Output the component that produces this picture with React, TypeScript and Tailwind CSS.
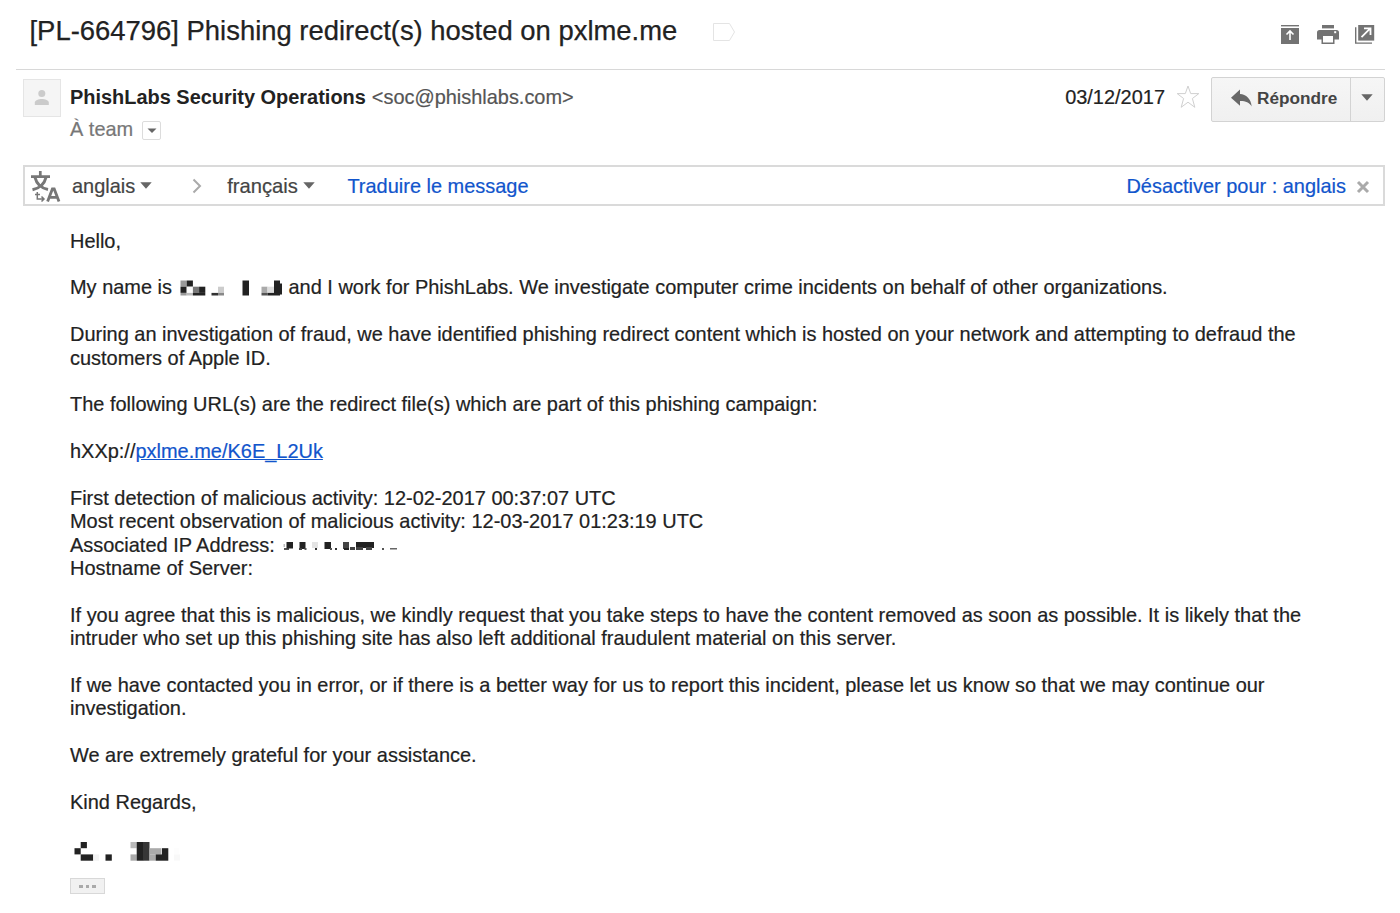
import type { ReactNode } from "react";

type Cell = [x: number, y: number, w: number, h: number, fill: string];

function Mosaic({ width, height, cells, className }: { width: number; height: number; cells: Cell[]; className: string }) {
  return (
    <svg width={width} height={height} viewBox={`0 0 ${width} ${height}`} className={className} aria-hidden="true">
      {cells.map(([x, y, w, h, fill], i) => (
        <rect key={i} x={x} y={y} width={w} height={h} fill={fill} />
      ))}
    </svg>
  );
}

const nameCells: Cell[] = [
  [0.5, 0.5, 6.2, 6.2, "#999"], [6.7, 0.5, 6.2, 6.2, "#222"], [0.5, 6.7, 6.2, 6.2, "#222"], [0.5, 12.9, 6.2, 2.6, "#999"],
  [6.7, 6.7, 6.2, 6.2, "#fafafa"], [12.9, 6.7, 6.2, 6.2, "#777"], [19.1, 6.7, 6.2, 6.2, "#222"],
  [6.7, 12.9, 6.2, 2.6, "#bbb"], [12.9, 12.9, 12.4, 2.6, "#222"],
  [31.5, 12.9, 6.5, 2.6, "#333"], [38, 6.7, 6, 6.2, "#ccc"], [38, 12.9, 6, 2.6, "#888"],
  [62.5, 0.5, 6.5, 15, "#222"],
  [81.5, 6.7, 6, 6.2, "#aaa"], [87.5, 6.7, 6.5, 6.2, "#ddd"], [94, 0.5, 6, 15, "#222"], [100, 3.5, 2, 11, "#222"],
  [81.5, 12.9, 6, 2.6, "#555"], [87.5, 12.9, 6.5, 2.6, "#222"],
];

const ipCells: Cell[] = [
  [0.5, 3, 1.5, 3, "#bbb"], [1, 7, 5, 2, "#555"], [3.5, 1, 6.5, 6.5, "#222"], [16.5, 1, 6, 7, "#222"], [16, 7, 3, 2, "#444"],
  [21.5, 7, 2, 2, "#555"], [29, 1, 6, 6, "#e4e4e4"], [32, 7, 2, 2, "#333"], [41.5, 1, 6.5, 7, "#222"], [47, 7, 2, 2, "#555"],
  [52, 7, 2, 2, "#333"], [60, 1, 6, 7, "#444"], [61, 7, 5, 2, "#222"], [67, 6, 5, 3, "#444"], [73, 1, 18, 6, "#222"], [73, 6, 7, 3, "#444"],
  [83, 6, 6, 3, "#444"], [99, 7, 2, 2, "#555"], [107, 7, 7, 1.5, "#666"],
];

const signatureCells: Cell[] = [
  [6.7, 1, 6.2, 6.2, "#222"], [0.5, 7.2, 6.2, 6.2, "#222"], [6.7, 13.4, 12.5, 6.3, "#222"], [19.2, 13.4, 6, 6.3, "#f2f2f2"],
  [31.5, 13.4, 6.3, 6.3, "#222"],
  [56.5, 1, 6.2, 6.2, "#bbb"], [56.5, 13.4, 6.2, 6.3, "#aaa"], [62.7, 1, 6.5, 18.7, "#222"], [69, 1, 6.5, 18.7, "#373737"],
  [75.5, 7.2, 12, 6.3, "#aaa"], [75.5, 13.4, 6.2, 6.3, "#aaa"], [81.7, 13.4, 6.3, 6.3, "#222"], [88, 7.2, 6.3, 12.5, "#222"],
  [100, 7, 5, 6, "#fdfdfd"], [100, 13.5, 6, 6, "#f8f8f8"],
];

function Caret({ className = "" }: { className?: string }) {
  return (
    <svg width="12" height="7" viewBox="0 0 12 7" className={className}>
      <path d="M0.3 0.3H11.7L6 6.7Z" fill="currentColor" />
    </svg>
  );
}

function Line({ children }: { children?: ReactNode }) {
  return <div className="flex h-[23.375px] items-center whitespace-nowrap">{children}</div>;
}

function SubjectBar() {
  return (
    <header className="ml-4 mr-[15px] flex h-[70px] items-start border-b-[1.5px] border-[#d8d8d8] pl-[13.5px]">
      <h1 className="mt-[15px] whitespace-nowrap text-[27.43px] leading-8 [-webkit-text-stroke:0.25px]">[PL-664796] Phishing redirect(s) hosted on pxlme.me</h1>
      <svg width="24" height="20" viewBox="0 0 24 20" className="ml-[35px] mt-[22px] shrink-0">
        <path d="M1.5 1.5H17.5L22.5 10L17.5 18.5H1.5Z" fill="none" stroke="#e4e4e4" />
      </svg>
      <div className="ml-auto mr-[10px] mt-[24px] flex items-start text-[#737373]">
        <svg width="18" height="20" viewBox="0 0 18 20" fill="currentColor">
          <rect y="1" width="18" height="1.4" />
          <rect y="4" width="18" height="16" />
          <path d="M9 16V7.5M5.5 10.5L9 7L12.5 10.5" fill="none" stroke="#fff" strokeWidth="1.6" />
        </svg>
        <svg width="22" height="20" viewBox="0 0 22 20" fill="currentColor" className="ml-[18px]">
          <rect x="5" y="1" width="12" height="3.4" />
          <path d="M2.5 6H19.5Q22 6 22 8.5V15.5H17.5V20H4.5V15.5H0V8.5Q0 6 2.5 6Z" />
          <rect x="6" y="12" width="10" height="6.5" fill="#fff" />
          <rect x="17.2" y="7.2" width="2" height="2" fill="#fff" />
        </svg>
        <svg width="20" height="20" viewBox="0 0 20 20" fill="currentColor" className="ml-4">
          <path d="M0 3.2H1.4V18.4H17V19.8H0Z" />
          <rect x="3.2" y="1" width="16" height="15.6" />
          <path d="M6.5 13.2L15 4.7M9 4.4H15.5V11" fill="none" stroke="#fff" strokeWidth="1.8" />
        </svg>
      </div>
    </header>
  );
}

function SenderRow() {
  return (
    <section className="ml-[23px] mr-[15px] flex h-[95px] items-start">
      <div className="mt-[9px] flex size-[38px] items-center justify-center border border-[#e5e5e5] bg-[#f5f5f5]">
        <svg width="16" height="17" viewBox="0 0 16 17" fill="#cbcbcb" className="mb-px">
          <circle cx="7.8" cy="4.5" r="3.5" />
          <path d="M0.8 16V13.5C0.8 11.3 4.5 9.9 7.8 9.9S14.8 11.3 14.8 13.5V16Z" />
        </svg>
      </div>
      <div className="ml-[9px] mt-4">
        <div className="flex h-6 items-center whitespace-nowrap">
          <strong className="text-[19.94px]">PhishLabs Security Operations</strong>
          <span className="ml-1.5 text-[19.93px] text-[#555] [-webkit-text-stroke:0.2px]">&lt;soc@phishlabs.com&gt;</span>
        </div>
        <div className="mt-[8px] flex h-6 items-center text-[#777] [-webkit-text-stroke:0.2px]">
          À team
          <span className="ml-[9px] flex size-[19px] items-center justify-center rounded-[2px] border-[1.5px] border-[#dcdcdc] text-[#666]">
            <svg width="10" height="6" viewBox="0 0 10 6" className="mt-0.5"><path d="M0.5 0.5H9.5L5 5Z" fill="currentColor" /></svg>
          </span>
        </div>
      </div>
      <span className="ml-auto mt-[15px] leading-6 [-webkit-text-stroke:0.2px]">03/12/2017</span>
      <svg width="24" height="25" viewBox="0 0 24 25" className="ml-[11px] mt-[14px]">
        <path d="M12 2L14.7 9.6H22.8L16.4 14.5L18.8 23.3L12 18.2L5.2 23.3L7.6 14.5L1.2 9.6H9.3Z" fill="none" stroke="#d0d0d0" />
      </svg>
      <div className="ml-[11px] mt-[7px] flex h-[45px] w-[174px] rounded-[2px] border border-[#d3d3d3] bg-linear-to-b from-[#f6f6f6] to-[#f0f0f0] text-[#666]">
        <button className="flex w-[139px] items-center border-r border-[#d3d3d3] pb-0.5 pl-[19px]">
          <svg width="21" height="19" viewBox="0 0 21 19" fill="#686868">
            <path d="M0 8.7L9 0.5V5C15 5.4 20 9.5 20.7 17.5C18.3 13.6 14.5 12 9 12.1V16.8Z" />
          </svg>
          <span className="ml-[5px] text-[17.2px] font-bold text-[#444]">Répondre</span>
        </button>
        <button className="flex flex-1 items-center justify-center pr-px"><Caret className="mb-[5px]" /></button>
      </div>
    </section>
  );
}

function TranslateBar() {
  return (
    <section className="ml-[23px] mr-[15px] flex h-[41px] items-center whitespace-nowrap border-2 border-[#dadada] text-[#444] [-webkit-text-stroke:0.2px]">
      <svg width="32" height="34" viewBox="0 0 32 34" className="ml-[5px] mt-[3px] shrink-0" fill="none" stroke="#777">
        <path d="M1 6.7H20M10.3 1V6.5" strokeWidth="2.7" />
        <path d="M5 7.5C6.5 13.5 11 18 18 19.5M16 7.5C14.5 13.5 10.5 18 2.5 19.8" strokeWidth="3" />
        <path d="M7.3 22V29H13.5M5 24.5H10M11.5 26.5L14 29L11.5 31.5" strokeWidth="1.5" />
        <path d="M17.6 31.5L22.4 19H24.2L29 31.5M19.5 27.3H27" strokeWidth="2.8" />
      </svg>
      <span className="ml-[10px] pt-0.5">anglais</span>
      <Caret className="ml-[5px] text-[#666]" />
      <svg width="10" height="16" viewBox="0 0 10 16" className="ml-10"><path d="M1.5 1.5L8 8L1.5 14.5" fill="none" stroke="#aaa" strokeWidth="2" /></svg>
      <span className="ml-[25px] pt-0.5 text-[20.2px]">français</span>
      <Caret className="ml-[5px] text-[#666]" />
      <a className="ml-[32.5px] pt-0.5 text-[#1155cc]">Traduire le message</a>
      <a className="ml-auto pt-0.5 text-[#1155cc]">Désactiver pour : anglais</a>
      <svg width="14" height="14" viewBox="0 0 14 14" className="ml-[10px] mr-[13px] mt-[3px]"><path d="M2 2L12 12M12 2L2 12" stroke="#aaa" strokeWidth="3" /></svg>
    </section>
  );
}

export default function App() {
  return (
    <main className="h-[913px] w-[1400px] overflow-hidden bg-white font-['Liberation_Sans',Arial,sans-serif] text-[19.97px] text-[#222]">
      <SubjectBar />
      <SenderRow />
      <TranslateBar />
      <article className="ml-[70px] flex flex-col pt-6 text-[19.95px] [-webkit-text-stroke:0.2px]">
        <Line>Hello,</Line>
        <Line />
        <Line>
          My name is
          <Mosaic width={103} height={16} cells={nameCells} className="ml-[8px] mr-[5.5px]" />
          and I work for PhishLabs. We investigate computer crime incidents on behalf of other organizations.
        </Line>
        <Line />
        <Line>During an investigation of fraud, we have identified phishing redirect content which is hosted on your network and attempting to defraud the</Line>
        <Line>customers of Apple ID.</Line>
        <Line />
        <Line>The following URL(s) are the redirect file(s) which are part of this phishing campaign:</Line>
        <Line />
        <Line>hXXp://<a className="text-[#1155cc] underline">pxlme.me/K6E_L2Uk</a></Line>
        <Line />
        <Line>First detection of malicious activity: 12-02-2017 00:37:07 UTC</Line>
        <Line>Most recent observation of malicious activity: 12-03-2017 01:23:19 UTC</Line>
        <Line>
          Associated IP Address:
          <Mosaic width={116} height={10} cells={ipCells} className="ml-[8px] mt-px" />
        </Line>
        <Line>Hostname of Server:</Line>
        <Line />
        <Line>If you agree that this is malicious, we kindly request that you take steps to have the content removed as soon as possible. It is likely that the</Line>
        <Line>intruder who set up this phishing site has also left additional fraudulent material on this server.</Line>
        <Line />
        <Line>If we have contacted you in error, or if there is a better way for us to report this incident, please let us know so that we may continue our</Line>
        <Line>investigation.</Line>
        <Line />
        <Line>We are extremely grateful for your assistance.</Line>
        <Line />
        <Line>Kind Regards,</Line>
        <Mosaic width={107} height={21} cells={signatureCells} className="ml-1 mt-[27px]" />
        <button className="mt-4 flex h-4 w-[35px] items-center justify-center gap-[3px] border border-[#d8d8d8] bg-[#f1f1f1]">
          <i className="size-[3.5px] bg-[#aaa]" />
          <i className="size-[3.5px] bg-[#aaa]" />
          <i className="size-[3.5px] bg-[#aaa]" />
        </button>
      </article>
    </main>
  );
}
